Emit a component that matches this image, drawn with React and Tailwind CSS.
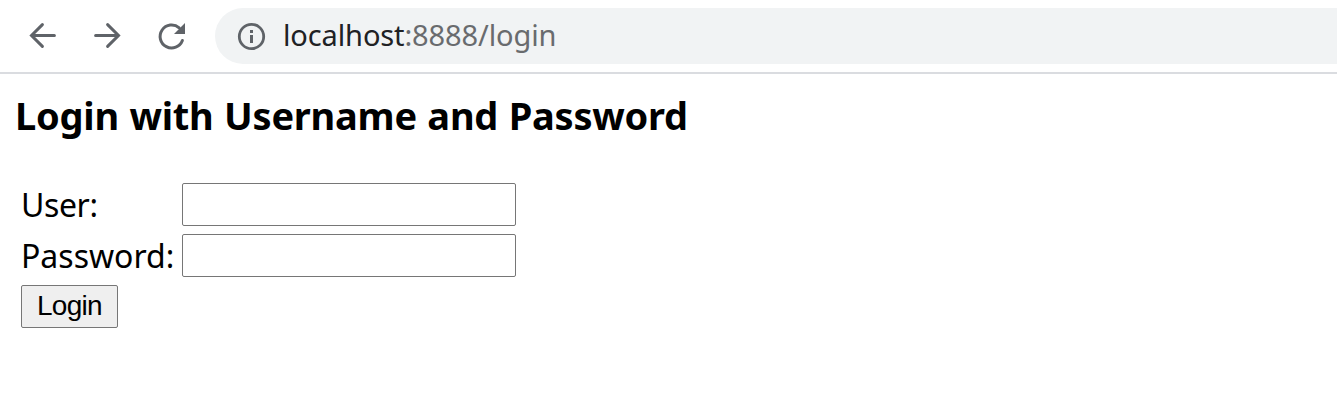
import React from "react";
const icon = "h-8 w-8 shrink-0 fill-none stroke-[#5f6368]";
function Toolbar() {
  return (
    <header className="flex h-[74px] items-start border-b-2 border-[#dadce0] bg-white pt-2">
      <nav className="flex h-14 w-[215px] shrink-0 items-center gap-8 pl-[27px]">
        <button aria-label="Back"><svg className={icon} viewBox="0 0 32 32" strokeWidth="3" strokeLinecap="round"><path d="M27.4 15.5H5M15.4 4.6L4.5 15.5l10.9 10.9" /></svg></button>
        <button aria-label="Forward"><svg className={icon} viewBox="0 0 32 32" strokeWidth="3" strokeLinecap="round"><path d="M4.6 15.5H27M16.6 4.6l10.9 10.9-10.9 10.9" /></svg></button>
        <button aria-label="Reload"><svg className={icon} viewBox="0 0 32 32" strokeWidth="3" strokeLinecap="round"><path d="M24.2 7.8A11.5 11.5 0 1 0 27.4 20.5" /><path className="fill-[#5f6368] stroke-none" d="M30 3v11H19z" /></svg></button>
      </nav>
      <div className="flex h-14 flex-1 items-center rounded-l-full bg-[#f1f3f4] pl-5">
        <svg className={icon} viewBox="0 0 32 32"><circle cx="16.5" cy="16.5" r="12.2" strokeWidth="2.8" /><path className="fill-[#5f6368] stroke-none" d="M15 10h3v3h-3zM15 15h3v8h-3z" /></svg>
        <span className="ml-4 whitespace-nowrap pb-0.5 text-[29px] leading-10 tracking-[-0.12px] text-[#696b6e]"><span className="text-[#202124]">localhost</span>:8888/login</span>
      </div>
    </header>
  );
}
function Field({ label, type }) {
  return (
    <label className="flex h-[43px] items-center">
      <span className="w-[161px] whitespace-nowrap text-[32px] leading-10">{label}</span>
      <input type={type} className="h-[43px] w-[334px] rounded-[2px] border border-[#767676] bg-white px-1 outline-none" />
    </label>
  );
}
export default function App() {
  return (
    <div className="h-[403px] w-full overflow-hidden bg-white font-['Noto_Sans',sans-serif] text-black">
      <Toolbar />
      <main className="pl-[15px] pt-4">
        <h3 className="text-[38px] font-bold leading-[50px] tracking-[-0.24px] [word-spacing:0.9px]">Login with Username and Password</h3>
        <form className="mt-[43px] flex flex-col gap-2 pl-1.5" onSubmit={(e) => e.preventDefault()}>
          <Field label={<span className="tracking-[-0.4px]">User:</span>} type="text" />
          <Field label="Password:" type="password" />
          <button className="h-[43px] w-[97px] rounded-[2px] border border-[#767676] bg-[#efefef] pb-px font-['Liberation_Sans',sans-serif] text-[28px] leading-8 tracking-[-0.7px]">Login</button>
        </form>
      </main>
    </div>
  );
}
